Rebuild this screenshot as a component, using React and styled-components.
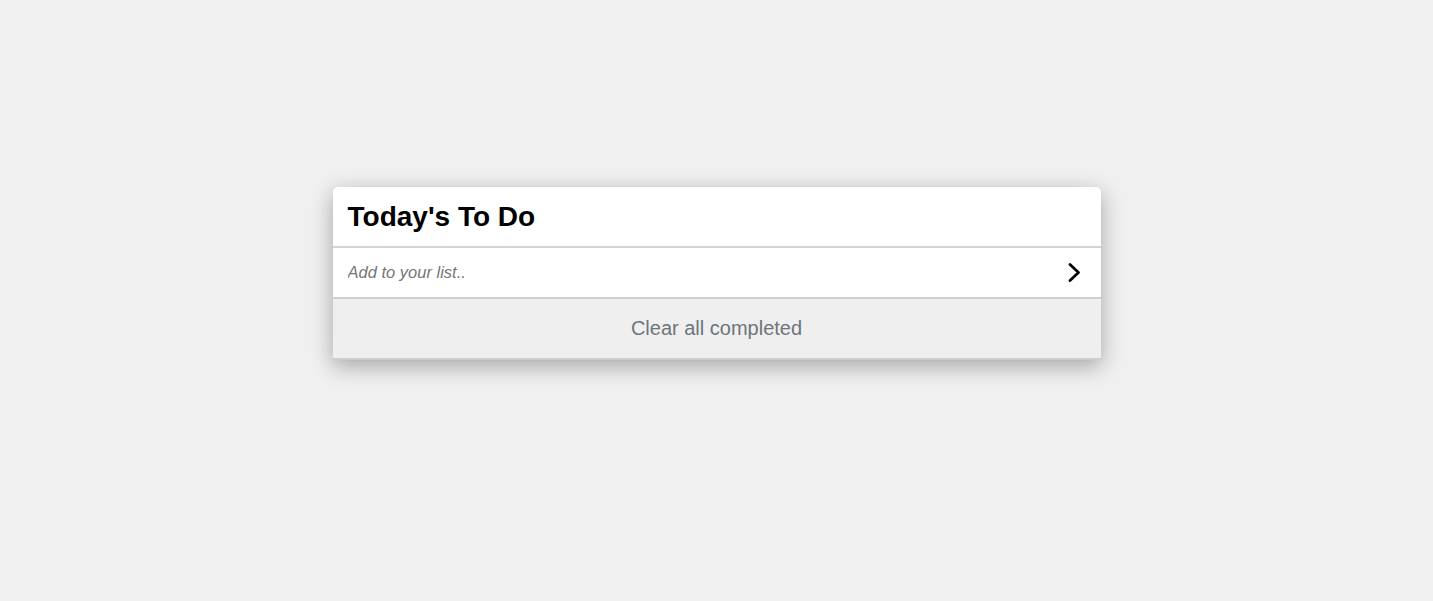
import React from 'react';
import styled, { createGlobalStyle } from 'styled-components';

const GlobalStyle = createGlobalStyle`
  html, body {
    margin: 0;
    padding: 0;
    background: #f0f0f0;
    font-family: "Liberation Sans", Arial, sans-serif;
  }
`;

export default function App() {
  return (
    <Page>
      <GlobalStyle />
      <Card>
        <Header>
          <Title>Today's To Do</Title>
        </Header>
        <AddForm onSubmit={(e) => e.preventDefault()}>
          <AddInput placeholder="Add to your list.." />
          <SubmitButton type="submit" aria-label="Add">
            <svg width="15" height="21" viewBox="0 0 15 21" fill="none">
              <path d="M3 2.5 L11.5 10.5 L3 18.5" stroke="#000" strokeWidth="2.8" strokeLinecap="round" strokeLinejoin="round" />
            </svg>
          </SubmitButton>
        </AddForm>
        <Footer>
          <ClearButton type="button">Clear all completed</ClearButton>
        </Footer>
      </Card>
    </Page>
  );
}

const Page = styled.div`
  min-height: 601px;
  display: flex;
  justify-content: center;
  padding-top: 187px;
  box-sizing: border-box;
`;

const Card = styled.div`
  width: 768px;
  height: fit-content;
  background: #fff;
  border-radius: 5px 5px 0 0;
  box-shadow: 0 6px 22px rgba(0, 0, 0, 0.32);
  overflow: hidden;
`;

const Header = styled.div`
  height: 61px;
  display: flex;
  align-items: center;
  padding: 0 15px;
  border-bottom: 2px solid #d4d4d4;
  box-sizing: border-box;
`;

const Title = styled.h1`
  margin: 0;
  font-size: 28px;
  font-weight: bold;
  color: #000;
  padding-top: 1px;
`;

const AddForm = styled.form`
  height: 51px;
  display: flex;
  align-items: center;
  padding: 0 19px 1px 15px;
  border-bottom: 2px solid #cfcfcf;
  box-sizing: border-box;
`;

const AddInput = styled.input`
  flex: 1;
  border: none;
  outline: none;
  padding: 0;
  font-family: "Liberation Sans", Arial, sans-serif;
  font-size: 16.5px;
  font-style: italic;
  color: #333;
  background: transparent;
  &::placeholder {
    color: #757575;
  }
`;

const SubmitButton = styled.button`
  border: none;
  background: none;
  padding: 0;
  display: flex;
  align-items: center;
  cursor: pointer;
`;

const Footer = styled.div`
  height: 61px;
  background: #efefef;
  border-bottom: 2px solid #cdcdcd;
  box-sizing: border-box;
  display: flex;
  justify-content: center;
  align-items: center;
`;

const ClearButton = styled.button`
  border: none;
  background: none;
  font-family: "Liberation Sans", Arial, sans-serif;
  font-size: 20px;
  color: #6c757d;
  cursor: pointer;
  padding: 0;
`;
